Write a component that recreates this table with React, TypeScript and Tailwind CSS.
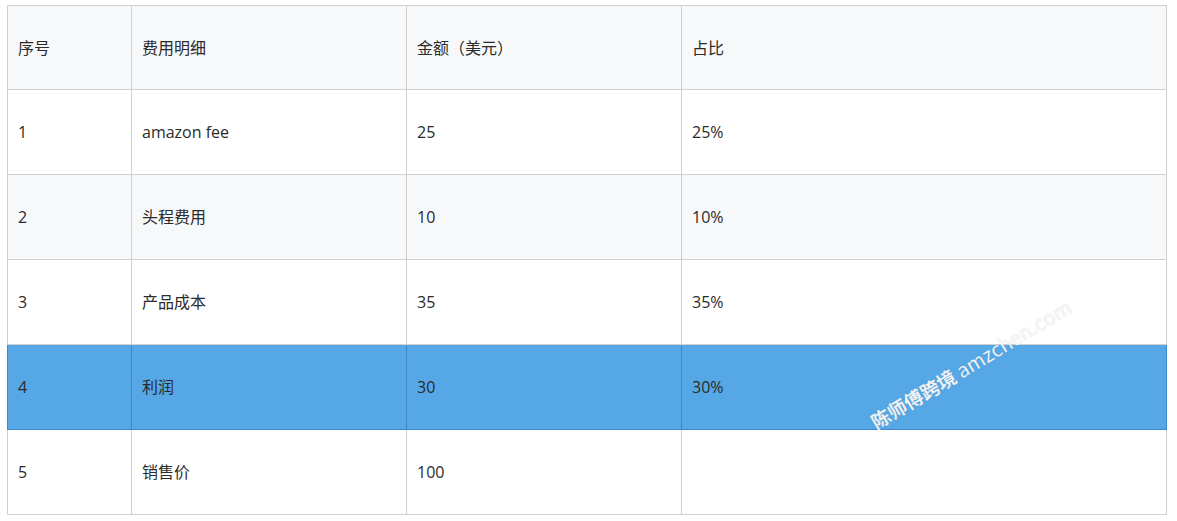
const rows = [
  { no: "1", name: "amazon fee", amount: "25", pct: "25%" },
  { no: "2", name: "头程费用", amount: "10", pct: "10%" },
  { no: "3", name: "产品成本", amount: "35", pct: "35%" },
  { no: "4", name: "利润", amount: "30", pct: "30%", hl: true },
  { no: "5", name: "销售价", amount: "100", pct: "" },
]

export default function App() {
  return (
    <div className="relative w-[1177px] h-[521px] bg-white pt-[5px] pl-[7px] font-['Segoe_UI','Open_Sans','Noto_Sans_CJK_SC',sans-serif] text-[16px] text-[#2b2b2b]">
      <table className="table-fixed border-collapse w-[1160px]">
        <colgroup>
          <col className="w-[124px]" />
          <col className="w-[275px]" />
          <col className="w-[275px]" />
          <col />
        </colgroup>
        <thead>
          <tr className="bg-[#f7f8fa]">
            {["序号", "费用明细", "金额（美元）", "占比"].map((h) => (
              <th key={h} className="h-[84px] border border-[#d0d0d0] px-[10px] text-left font-normal">
                {h}
              </th>
            ))}
          </tr>
        </thead>
        <tbody>
          {rows.map((r, i) => {
            const cell = r.hl
              ? "h-[85px] border border-[#3f88c8] border-t-[#d0d0d0] px-[10px]"
              : "h-[85px] border border-[#d0d0d0] px-[10px]"
            return (
              <tr key={r.no} className={r.hl ? "bg-[#55a8e5]" : i % 2 === 1 ? "bg-[#f7f8fa]" : "bg-white"}>
                <td className={cell}>{r.no}</td>
                <td className={cell}>{r.name}</td>
                <td className={cell}>{r.amount}</td>
                <td className={cell}>{r.pct}</td>
              </tr>
            )
          })}
        </tbody>
      </table>

      {/* watermark */}
      <div className="absolute left-[856px] top-[354px] w-[230px] -rotate-[31deg] whitespace-nowrap text-[19px] font-bold text-white/90 [text-shadow:0_0_1px_rgba(0,0,0,0.25)] font-['Noto_Sans_CJK_SC','Open_Sans',sans-serif] leading-none">
        陈师傅跨境 <span className="font-normal text-[20px]">amzchen.com</span>
      </div>
    </div>
  )
}
